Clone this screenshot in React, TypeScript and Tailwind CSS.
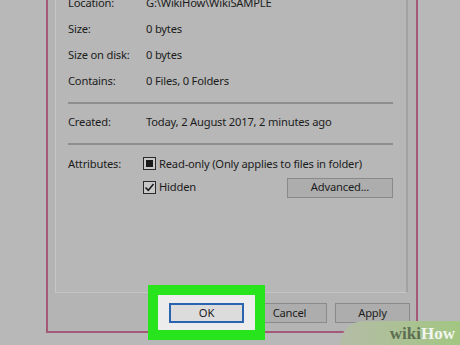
import React from 'react';

const font = { fontFamily: '"Noto Sans", "Open Sans", sans-serif' };

function Row({ label, value }: { label: string; value: string }) {
  return (
    <div className="flex h-[26px] items-center">
      <div className="w-[78px] shrink-0">{label}</div>
      <div>{value}</div>
    </div>
  );
}

function Separator() {
  return <div className="h-[2px] bg-[#8e8e8e]" />;
}

function WinButton({ children, className = '' }: { children: React.ReactNode; className?: string }) {
  return (
    <div
      className={`flex h-[20px] w-[75px] items-center justify-center border border-[#8a8a8a] bg-[#adadad] ${className}`}
    >
      {children}
    </div>
  );
}

export default function App() {
  return (
    <div
      className="relative h-[345px] w-[460px] overflow-hidden bg-[#b8b8b8] text-[11.2px] tracking-[-0.2px] text-[#1c1c1c]"
      style={font}
    >
      <div className="ml-[46px] flex h-[333px] w-[372px] flex-col border-x-2 border-b-2 border-[#a45a76] bg-[#b4b4b4]">
        {/* tab page */}
        <div className="ml-[7px] mr-[8px] h-[293px] overflow-hidden border-b border-l border-r-2 border-b-[#c4c4c4] border-l-[#c6c6c6] border-r-[#a2a2a2] bg-[#b7b7b7] pl-[12px] pr-[13px]">
          <div className="-mt-[10px]">
            <Row label="Location:" value="G:\WikiHow\WikiSAMPLE" />
            <Row label="Size:" value="0 bytes" />
            <Row label="Size on disk:" value="0 bytes" />
            <Row label="Contains:" value="0 Files, 0 Folders" />
            <div className="mt-[8px]">
              <Separator />
            </div>
            <div className="mt-[5px]">
              <Row label="Created:" value="Today, 2 August 2017, 2 minutes ago" />
            </div>
            <div className="mt-[8px]">
              <Separator />
            </div>
            <div className="mt-[6px] flex h-[26px] items-center">
              <div className="w-[75px] shrink-0">Attributes:</div>
              <div className="flex items-center gap-[3px]">
                <div className="flex h-[13px] w-[13px] items-center justify-center border border-[#2a2a2a] bg-[#c8c8c8]">
                  <div className="h-[7px] w-[7px] bg-[#1a1a1a]" />
                </div>
                <span>Read-only (Only applies to files in folder)</span>
              </div>
            </div>
            <div className="flex h-[21px] items-center">
              <div className="ml-[75px] flex items-center gap-[3px]">
                <div className="flex h-[13px] w-[13px] items-center justify-center border border-[#2a2a2a] bg-[#c8c8c8]">
                  <svg width="11" height="11" viewBox="0 0 11 11">
                    <path d="M1.5 5.5 L4.3 8.3 L9.5 2" fill="none" stroke="#1a1a1a" strokeWidth="1.5" />
                  </svg>
                </div>
                <span>Hidden</span>
              </div>
              <WinButton className="ml-auto w-[106px]">Advanced...</WinButton>
            </div>
          </div>
        </div>

        {/* dialog buttons */}
        <div className="mt-[10px] flex justify-end gap-[8px] pr-[6px]">
          <div className="relative">
            <div className="absolute -bottom-[17px] -left-[21px] -right-[21px] -top-[18px] border-[10px] border-[#27e41c] bg-[#ececec]" />
            <div className="relative flex h-[20px] w-[75px] items-center justify-center border-2 border-[#2a64b0] bg-[#dcdcdc]">
              OK
            </div>
          </div>
          <WinButton>Cancel</WinButton>
          <WinButton>Apply</WinButton>
        </div>
      </div>

      {/* watermark */}
      <div className="absolute bottom-0 right-0 flex h-[24px] w-[120px] items-end justify-end rounded-tl-[28px] bg-gradient-to-r from-[#b4bca6] to-[#a2c682] pb-[3px] pr-[5px]">
        <span
          className="text-[17px] font-bold leading-none tracking-normal"
          style={{ fontFamily: '"Liberation Serif", "DejaVu Serif", serif' }}
        >
          <span className="text-[#5d6e51]">wiki</span>
          <span className="text-[#f2f6ee]">How</span>
        </span>
      </div>
    </div>
  );
}
